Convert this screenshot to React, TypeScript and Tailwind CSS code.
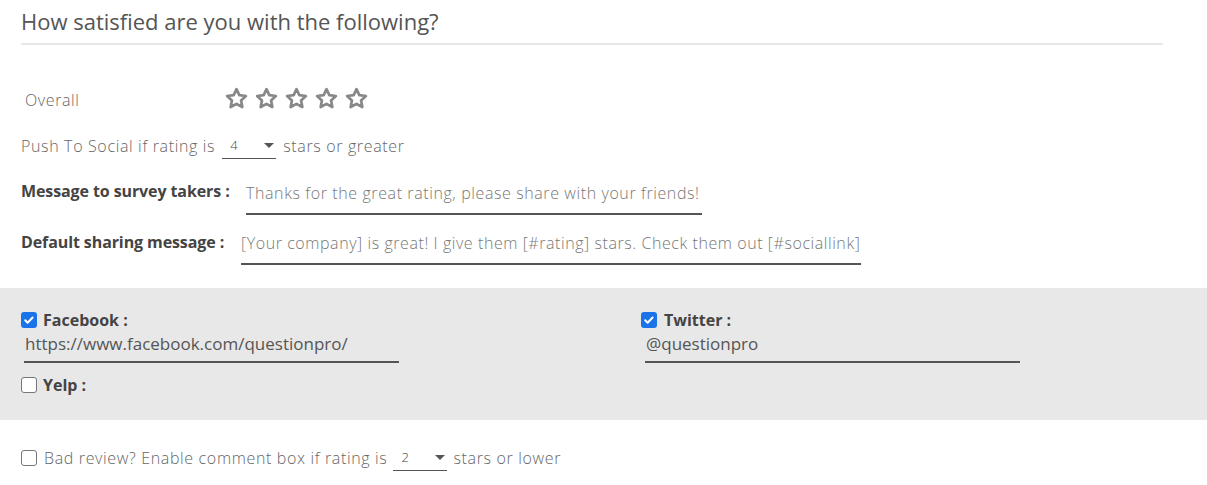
import { useState } from 'react';

const FONT = { fontFamily: '"Open Sans", "Noto Sans", sans-serif' };

function Star() {
  return (
    <svg width="25" height="25" viewBox="0 0 24 24" className="shrink-0">
      <path
        d="M12 3l2.7 5.8 6.3.8-4.6 4.3 1.2 6.3L12 17.1l-5.6 3.1 1.2-6.3L3 9.6l6.3-.8z"
        fill="none"
        stroke="#888"
        strokeWidth="2.6"
        strokeLinejoin="round"
      />
    </svg>
  );
}

function Check({ checked }: { checked: boolean }) {
  return checked ? (
    <span className="flex h-4 w-4 shrink-0 items-center justify-center rounded-[3px] bg-[#1a73e8]">
      <svg width="12" height="12" viewBox="0 0 12 12">
        <path d="M2.2 6.3l2.4 2.4 5-5.2" fill="none" stroke="#fff" strokeWidth="2" strokeLinecap="round" strokeLinejoin="round" />
      </svg>
    </span>
  ) : (
    <span className="h-4 w-4 shrink-0 rounded-[3px] border border-[#767676] bg-white" />
  );
}

function MiniSelect({ value, className }: { value: string; className: string }) {
  return (
    <span
      className={`flex h-[25px] w-[54px] items-center justify-between border-b border-[#555] pl-2 pr-[2px] text-[13px] tracking-normal text-[#444] ${className}`}
    >
      <span>{value}</span>
      <span className="h-0 w-0 border-x-[5px] border-t-[5px] border-x-transparent border-t-[#555]" />
    </span>
  );
}

export default function App() {
  const [fb] = useState(true);
  const [tw] = useState(true);

  return (
    <div className="min-h-[485px] w-[1207px] bg-white text-[#666]" style={FONT}>
      <div className="ml-[21px] w-[1142px]">
        <h1 className="border-b-2 border-[#e8e8e8] pb-[8px] pt-[7px] text-[22px] font-normal leading-[28px] text-[#555]">
          How satisfied are you with the following?
        </h1>

        <div className="mt-[43px] flex h-[24px] items-center">
          <span className="w-[203px] pl-1 text-[16px] font-light tracking-[0.6px] text-[#666]">Overall</span>
          <div className="-mt-[4px] flex gap-[5px]">
            <Star />
            <Star />
            <Star />
            <Star />
            <Star />
          </div>
        </div>

        <div className="mt-[22px] flex h-[24px] items-center whitespace-nowrap text-[16px] font-light tracking-[0.65px] text-[#666]">
          <span>Push To Social if rating is</span>
          <MiniSelect value="4" className="ml-[7px] mr-[7px]" />
          <span>stars or greater</span>
        </div>

        <div className="mt-[21px] flex items-start">
          <span className="w-[225px] whitespace-nowrap text-[16px] font-bold leading-[24px] tracking-[-0.1px] text-[#444]">
            Message to survey takers :
          </span>
          <div className="mt-[2px] w-[456px] whitespace-nowrap border-b-2 border-[#555] pb-[8px] text-[16px] font-light leading-[24px] tracking-[0.6px] text-[#777]">
            Thanks for the great rating, please share with your friends!
          </div>
        </div>

        <div className="mt-[15px] flex items-start">
          <span className="w-[220px] whitespace-nowrap text-[16px] font-bold leading-[24px] tracking-[-0.1px] text-[#444]">
            Default sharing message :
          </span>
          <div className="mt-[1px] w-[620px] whitespace-nowrap border-b-2 border-[#555] pb-[8px] text-[16px] font-light leading-[24px] tracking-[0.57px] text-[#777]">
            [Your company] is great! I give them [#rating] stars. Check them out [#sociallink]
          </div>
        </div>
      </div>

      <div className="mt-[23px] h-[132px] bg-[#e8e8e8] pl-[21px] pt-[22px]">
        <div className="grid grid-cols-[620px_1fr]">
          <div>
            <label className="flex h-[20px] items-center gap-[6px]">
              <Check checked={fb} />
              <span className="text-[16px] font-bold text-[#444]">Facebook :</span>
            </label>
            <div className="ml-[3px] h-[33px] w-[375px] border-b-2 border-[#555] px-[1px] pt-[2px] text-[17px] leading-[24px] text-[#555]">
              https://www.facebook.com/questionpro/
            </div>
            <label className="mt-[12px] flex h-[20px] items-center gap-[6px]">
              <Check checked={false} />
              <span className="text-[16px] font-bold text-[#444]">Yelp :</span>
            </label>
          </div>
          <div>
            <label className="flex h-[20px] items-center gap-[7px]">
              <Check checked={tw} />
              <span className="text-[16px] font-bold text-[#444]">Twitter :</span>
            </label>
            <div className="ml-[4px] h-[33px] w-[375px] border-b-2 border-[#555] px-[1px] pt-[2px] text-[17px] leading-[24px] text-[#555]">
              @questionpro
            </div>
          </div>
        </div>
      </div>

      <div className="ml-[21px] mt-[26px] flex h-[24px] items-center whitespace-nowrap text-[16px] font-light tracking-[0.65px] text-[#666]">
        <Check checked={false} />
        <span className="ml-[7px]">Bad review? Enable comment box if rating is</span>
        <MiniSelect value="2" className="ml-[6px] mr-[6px]" />
        <span>stars or lower</span>
      </div>
    </div>
  );
}
